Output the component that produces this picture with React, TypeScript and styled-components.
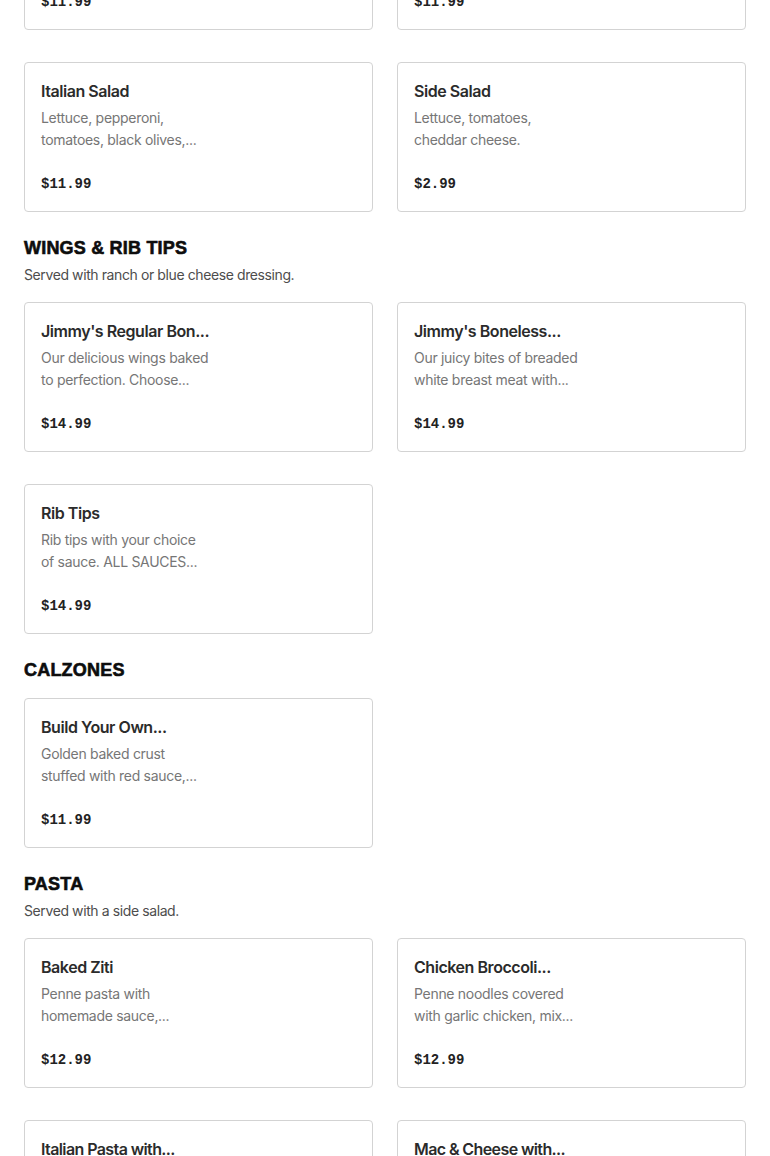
import React from 'react';
import styled, { createGlobalStyle } from 'styled-components';

interface MenuItem {
  name: string;
  desc: string[];
  price: string;
  loading?: boolean;
}

interface MenuSection {
  title?: string;
  note?: string;
  items: MenuItem[];
}

const GlobalStyle = createGlobalStyle`
  body {
    margin: 0;
    background: #ffffff;
    font-family: 'Inter', 'Liberation Sans', sans-serif;
    -webkit-font-smoothing: antialiased;
  }
`;

const Page = styled.div`
  padding: 0 24px;
  height: 1156px;
  overflow: hidden;
`;

// the list is scrolled, so the first row sits above the fold
const Scrolled = styled.div`
  margin-top: -120px;
`;

const Section = styled.section`
  & + & {
    margin-top: 24px;
  }
`;

const Heading = styled.h2`
  margin: 0;
  font-family: 'Liberation Sans', Arial, sans-serif;
  font-weight: 900;
  font-size: 18px;
  line-height: 24px;
  color: #0d0d0d;
  letter-spacing: 0.2px;
  -webkit-text-stroke: 0.6px #0d0d0d;
`;

const Note = styled.p`
  margin: 4px 0 0;
  font-size: 14px;
  line-height: 22px;
  color: #4d4d4d;
  letter-spacing: -0.4px;
`;

const Grid = styled.div<{ $top: boolean }>`
  display: grid;
  grid-template-columns: 1fr 1fr;
  column-gap: 24px;
  row-gap: 32px;
  margin-top: ${p => (p.$top ? '16px' : '0')};
`;

const Card = styled.div`
  box-sizing: border-box;
  height: 150px;
  border: 1px solid #d3d3d3;
  border-radius: 4px;
  padding: 16px;
  display: flex;
  flex-direction: column;
`;

const Name = styled.div<{ $loading?: boolean }>`
  font-size: 16px;
  line-height: 24px;
  font-weight: 600;
  color: #2b2b2b;
  letter-spacing: ${p => (p.$loading ? '-0.6px' : '-0.45px')};
  white-space: nowrap;
`;

const Desc = styled.div`
  margin-top: 4px;
  font-size: 14px;
  line-height: 22px;
  color: #767676;
  letter-spacing: -0.3px;
  white-space: nowrap;
`;

const Price = styled.div`
  margin-top: auto;
  margin-bottom: -1px;
  font-family: 'Liberation Mono', 'Courier New', monospace;
  font-weight: 700;
  font-size: 14px;
  line-height: 23px;
  color: #222222;
`;

const sections: MenuSection[] = [
  {
    items: [
      { name: 'Chef Salad', desc: ['Lettuce, ham, turkey,', 'tomatoes, egg,...'], price: '$11.99' },
      { name: 'Greek Salad', desc: ['Lettuce, feta cheese,', 'tomatoes, olives,...'], price: '$11.99' },
      { name: 'Italian Salad', desc: ['Lettuce, pepperoni,', 'tomatoes, black olives,...'], price: '$11.99' },
      { name: 'Side Salad', desc: ['Lettuce, tomatoes,', 'cheddar cheese.'], price: '$2.99' },
    ],
  },
  {
    title: 'WINGS & RIB TIPS',
    note: 'Served with ranch or blue cheese dressing.',
    items: [
      { name: "Jimmy's Regular Bon...", desc: ['Our delicious wings baked', 'to perfection. Choose...'], price: '$14.99' },
      { name: "Jimmy's Boneless...", desc: ['Our juicy bites of breaded', 'white breast meat with...'], price: '$14.99' },
      { name: 'Rib Tips', desc: ['Rib tips with your choice', 'of sauce. ALL SAUCES...'], price: '$14.99' },
    ],
  },
  {
    title: 'CALZONES',
    items: [
      { name: 'Build Your Own...', desc: ['Golden baked crust', 'stuffed with red sauce,...'], price: '$11.99' },
    ],
  },
  {
    title: 'PASTA',
    note: 'Served with a side salad.',
    items: [
      { name: 'Baked Ziti', desc: ['Penne pasta with', 'homemade sauce,...'], price: '$12.99' },
      { name: 'Chicken Broccoli...', desc: ['Penne noodles covered', 'with garlic chicken, mix...'], price: '$12.99' },
      { name: 'Italian Pasta with...', desc: ['', ''], price: '', loading: true },
      { name: 'Mac & Cheese with...', desc: ['', ''], price: '', loading: true },
    ],
  },
];

const ItemCard: React.FC<{ item: MenuItem }> = ({ item }) => (
  <Card>
    <Name $loading={item.loading}>{item.name}</Name>
    <Desc>
      {item.desc[0]}
      <br />
      {item.desc[1]}
    </Desc>
    <Price>{item.price}</Price>
  </Card>
);

export default function App() {
  return (
    <>
      <GlobalStyle />
      <Page>
        <Scrolled>
          {sections.map((s, i) => (
            <Section key={i}>
              {s.title && <Heading>{s.title}</Heading>}
              {s.note && <Note>{s.note}</Note>}
              <Grid $top={!!s.title}>
                {s.items.map(item => (
                  <ItemCard key={item.name} item={item} />
                ))}
              </Grid>
            </Section>
          ))}
        </Scrolled>
      </Page>
    </>
  );
}
